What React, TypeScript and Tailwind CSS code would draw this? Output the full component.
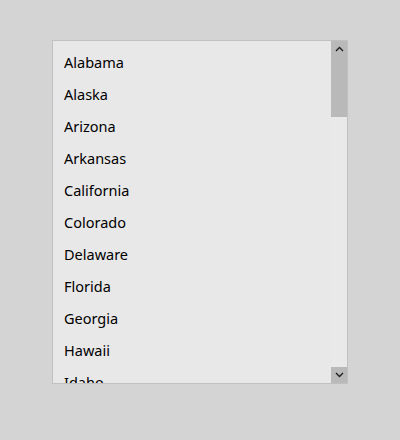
import React from "react";

const states = [
  "Alabama",
  "Alaska",
  "Arizona",
  "Arkansas",
  "California",
  "Colorado",
  "Delaware",
  "Florida",
  "Georgia",
  "Hawaii",
  "Idaho",
];

function Chevron({ up }: { up?: boolean }) {
  return (
    <svg width="9" height="6" viewBox="0 0 9 6" className="block">
      <path
        d={up ? "M1 5 L4.5 1.5 L8 5" : "M1 1 L4.5 4.5 L8 1"}
        fill="none"
        stroke="#1f1f1f"
        strokeWidth="1.4"
      />
    </svg>
  );
}

export default function App() {
  return (
    <div className="w-full h-[440px] bg-[#d4d4d4] pt-[40px] pl-[52px]">
      <div className="w-[296px] h-[344px] border border-[#c0c0c0] bg-[#e8e8e8] flex">
        <div className="flex-1 overflow-hidden pt-[6px]" style={{ fontFamily: '"Noto Sans", sans-serif' }}>
          {states.map((s) => (
            <div key={s} className="h-8 flex items-center px-[11px] text-[14.5px] text-[#000]">
              {s}
            </div>
          ))}
        </div>
        <div className="w-4 flex flex-col bg-[#e9e9e9]">
          <div className="h-4 bg-[#b9b9b9] flex items-center justify-center">
            <Chevron up />
          </div>
          <div className="h-[60px] bg-[#b9b9b9]" />
          <div className="flex-1" />
          <div className="h-4 bg-[#b9b9b9] flex items-center justify-center">
            <Chevron />
          </div>
        </div>
      </div>
    </div>
  );
}
